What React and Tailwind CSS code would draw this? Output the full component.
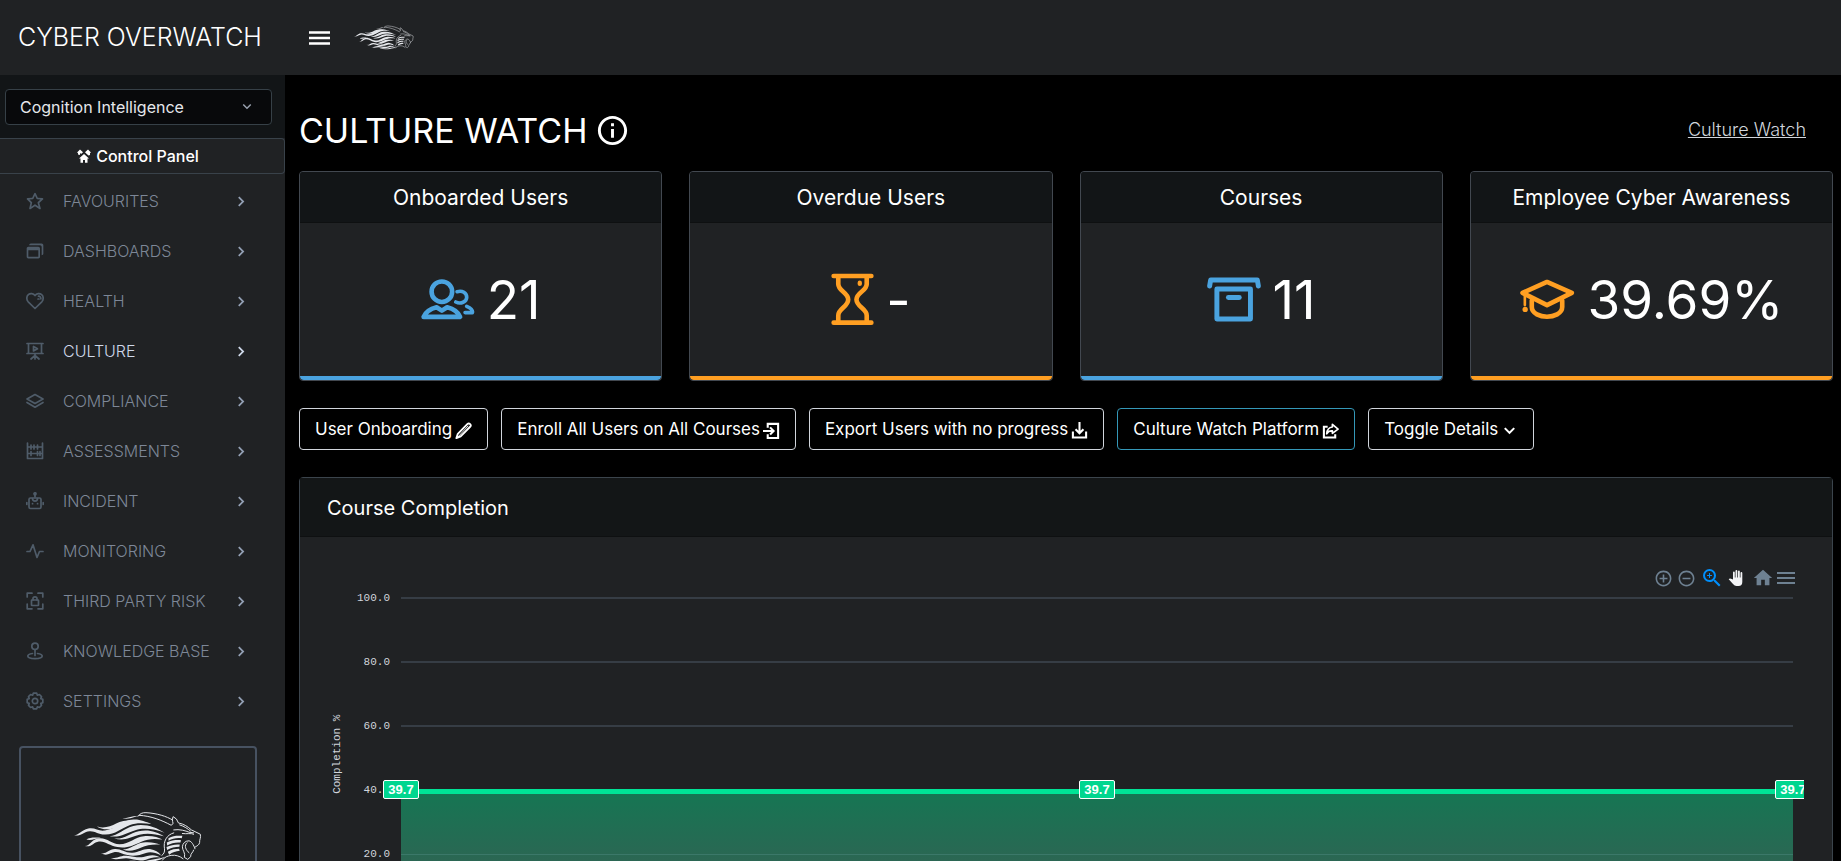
import React from 'react';
import { BiStar, BiWindows, BiChevronRight, BiChevronDown, BiInfoCircle } from 'react-icons/bi';
import { MdAddCircleOutline, MdRemoveCircleOutline, MdZoomIn, MdHome, MdMenu } from 'react-icons/md';
import { clsx } from 'clsx';

const LionLogo = ({ className }) => (
  <svg viewBox="218 276 388 160" className={className} fill="currentColor" aria-hidden="true">
    {/* mane */}
    <path d="M219 350C236 347 240 334 262 329C282 325 292 338 312 335C346 331 362 303 398 302C420 301 434 309 452 315C430 312 404 311 388 318C360 329 344 346 314 347C292 348 284 336 266 337C248 338 244 352 219 350Z" />
    <path d="M288 322C306 330 330 323 346 314C362 304 384 303 404 304C376 307 364 318 348 325C328 334 302 334 288 322Z" />
    <path d="M360 299C378 299 392 290 414 290C398 294 388 301 360 299Z" />
    <path d="M326 352C352 350 370 328 398 321C432 313 466 324 492 342C462 330 430 326 404 334C376 342 358 358 326 352Z" />
    <path d="M340 359C372 362 388 342 414 337C446 331 470 340 490 352C462 345 438 342 416 348C388 356 370 368 340 359Z" />
    <path d="M252 382C268 380 270 364 290 359C318 354 330 376 356 376C388 376 402 354 430 352C456 350 474 356 486 362C458 358 440 361 424 368C398 380 378 390 350 385C326 381 314 366 294 368C276 370 274 386 252 382Z" />
    <path d="M256 362C268 354 288 356 300 357C282 360 270 366 256 362Z" />
    <path d="M366 392C390 392 404 374 428 371C450 369 466 372 480 378C456 376 438 380 422 386C404 394 386 400 366 392Z" />
    <path d="M300 403C316 408 322 392 342 391C362 390 374 404 396 402C416 400 430 388 448 391C464 394 474 400 482 410C464 402 450 398 436 403C418 410 398 413 380 409C364 406 354 398 342 400C326 403 318 414 300 403Z" />
    <path d="M330 418C350 420 358 409 378 411C402 414 418 420 440 412C456 407 470 410 480 417C462 414 450 418 436 423C412 430 398 420 378 419C360 418 350 426 330 418Z" />
    <path d="M384 427C402 424 420 431 444 425C462 420 478 420 494 414C482 424 466 427 450 430C424 435 402 432 384 427Z" />
    {/* head */}
    <g fill="none" stroke="currentColor" strokeWidth="3" strokeLinecap="round" strokeLinejoin="round">
      <path d="M412 292Q420 280 436 281C470 283 498 292 516 303" />
      <path d="M416 289C452 291 484 304 512 319L518 314C515 305 516 298 518 293Q530 298 534 312C552 316 562 323 573 333L600 346C603 356 597 362 598 371C597 379 590 381 583 386" />
      <path d="M538 318C552 322 562 330 570 336M520 333C538 330 556 336 566 340L580 342M546 344C560 346 572 342 580 346" />
      <path d="M584 390C580 378 574 368 566 366C554 366 547 374 546 384C546 396 556 402 552 416L562 422L571 414C570 404 578 402 580 394" />
      <path d="M560 372C550 380 556 394 566 402M486 424C492 414 502 412 512 410C526 408 538 412 548 420" />
      <path d="M520 342C498 348 488 368 492 390C493 400 490 406 484 410" />
    </g>
    <path d="M504 358C518 350 532 350 546 351L544 358C530 356 516 358 504 366Z" />
    <path d="M499 371C514 364 528 363 542 364L540 371C526 370 512 372 500 380Z" />
    <path d="M498 385C512 378 524 376 538 377L537 384C524 384 512 387 500 394Z" />
    <path d="M502 399C514 392 524 390 536 390L538 396C526 398 516 400 506 408Z" />
  </svg>
);

const Outline = ({ children }) => (
  <svg viewBox="0 0 18 18" className="size-[18px]" fill="none" stroke="currentColor" strokeWidth="1.700" strokeLinecap="round" strokeLinejoin="round" aria-hidden="true">
    {children}
  </svg>
);

const LayersIcon = () => (
  <Outline>
    <path d="M9 2.500 17 7 9 11.500 1 7ZM1 10.500 9 15.200 17 10.500" />
  </Outline>
);

const HeartIcon = () => (
  <Outline>
    <path d="M9 16.500 2.200 9.800C.3 7.700.4 4.300 2.300 2.700 4.300.9 7.400 1.300 9 3.500 10.600 1.300 13.700.9 15.700 2.700 17.600 4.300 17.700 7.700 15.800 9.800Z" />
    <path d="M12.500 4.200c1.600 0 2.500 1.200 2.400 2.700M12 7h1" />
  </Outline>
);

const BoardIcon = () => (
  <Outline>
    <path d="M1 1.500H17M2.500 1.500V11.500M15.500 1.500V11.500M1 11.500H17M9 12V14M9 13.500 5 17M9 13.500 13 17M9 14V17" />
    <path d="M7.500 4.500V9L11.500 6.800Z" />
  </Outline>
);

const AbacusIcon = () => (
  <Outline>
    <path d="M1.500 1V16.500H16.500V1M1.500 5H16.500M1.500 11.500H16.500M5 3V7M8 3V7M11.500 3V7M5 9.500V13.500M11.500 9.500V13.500M14 9.500V13.500" />
  </Outline>
);

const BotIcon = () => (
  <Outline>
    <rect x="3" y="6" width="12" height="10.500" rx="1.500" />
    <path d="M9 2.500V5M.8 10.500V12.500M17.200 10.500V12.500M6.500 6.500C6.500 10 11.500 10 11.500 6.500M6.500 11.700H6.600M11.500 11.700H11.600" />
    <circle cx="9" cy="1.800" r="1" />
  </Outline>
);

const PulseIcon = () => (
  <Outline>
    <path d="M1 9.500H4L7 2.800 11 15.500 13.500 9.500H17" />
  </Outline>
);

const ScanLockIcon = () => (
  <Outline>
    <path d="M1.200 5V1.200H6M12 1.200H16.800V5M16.800 12V16.800H12M6 16.800H1.200V12" />
    <rect x="5.500" y="8" width="7" height="5.500" rx=".5" />
    <path d="M7 8V6.500C7 4.200 11 4.200 11 6.500V8" />
  </Outline>
);

const PinIcon = () => (
  <Outline>
    <circle cx="9" cy="4.300" r="3.200" />
    <path d="M9 7.500V13.500M6.500 11.500C3.500 12 1.800 12.800 1.800 14 1.800 17.500 16.200 17.500 16.200 14 16.200 12.800 14.500 12 11.500 11.500" />
  </Outline>
);

const GearIcon = () => (
  <Outline>
    <circle cx="9" cy="9" r="2.700" />
    <path d="M7.300 1.200H10.700L11.400 3.200 13.400 2.500 15.500 4.600 14.800 6.600 16.800 7.300V10.700L14.800 11.400 15.500 13.400 13.400 15.500 11.400 14.800 10.700 16.800H7.300L6.600 14.800 4.600 15.500 2.500 13.400 3.200 11.400 1.200 10.700V7.300L3.200 6.600 2.500 4.600 4.600 2.500 6.600 3.200Z" />
  </Outline>
);

// the heavier, square-cornered icons of the action buttons
const Bold = ({ children }) => (
  <svg viewBox="0 0 18 18" className="size-[17px]" fill="none" stroke="currentColor" strokeWidth="2.200" aria-hidden="true">
    {children}
  </svg>
);

const PencilIcon = () => (
  <Bold>
    <path strokeWidth="2" strokeLinejoin="round" d="M1.500 17 3 12.500 13 2.200Q14.500.8 16 2.200T16 5L6 15.200Z" />
    <path d="M3 16 14 4" strokeWidth="1" />
  </Bold>
);

const EnrollIcon = () => (
  <Bold>
    <path d="M5 6V2H16V17H5V13M0 9.500H11M7.500 5.700 11.200 9.500 7.500 13.300" />
  </Bold>
);

const DownloadIcon = () => (
  <Bold>
    <path d="M2 10V16.500H16V10M9 0V12M4.800 7.700 9 12 13.200 7.700" />
  </Bold>
);

const ShareIcon = () => (
  <Bold>
    <path d="M6 5H2V16.500H14V13" />
    <path strokeWidth="1.800" strokeLinejoin="round" d="M11 2.500 17 7.500 11 12V9.500C8 9.300 6.200 10.300 5 12.500 5.300 8.300 7.500 5.600 11 5.300Z" />
  </Bold>
);

const ToggleIcon = () => (
  <Bold>
    <path d="M4 6.500 9 11.500 14 6.500" />
  </Bold>
);

const HousesIcon = () => (
  <svg viewBox="0 0 14 14" className="size-[14px]" fill="currentColor" aria-hidden="true">
    <path d="M7 5 2 9.500H3.500V13.800H6V11H8V13.800H10.500V9.500H12Z" />
    <path d="M0 3.500 3 .500 6 3.200 4.500 4.700 3 4.200V6L1 5.500V4Z" />
    <path d="M14 3.500 11 .500 8 3.200 9.500 4.700 11.500 6.500 13 6V4Z" />
  </svg>
);

const UsersIcon = () => (
  <svg viewBox="397 566 163 123" className="h-[41px] w-[54px]" fill="none" stroke="currentColor" strokeWidth="14" strokeLinecap="round" strokeLinejoin="round" aria-hidden="true">
    <circle cx="460" cy="604" r="31" />
    <path d="M405 680C411 665 428 655 444 651L460 661 476 651C492 655 509 665 515 680Z" />
    <path strokeWidth="11" d="M506 604C522 599 535 608 535 621S517 643 502 635M535 648C548 654 554 661 552 667H530" />
  </svg>
);

const HourglassIcon = () => (
  <svg viewBox="120 338 130 158" className="h-[53px] w-[43px]" fill="none" stroke="currentColor" strokeWidth="14" strokeLinecap="round" aria-hidden="true">
    <path d="M128 346H242M128 487H242M142 350V370C142 392 172 395 172 417S142 445 142 465V484M228 350V370C228 392 197 395 197 417S228 445 228 465V484" />
    <path strokeWidth="13" d="M207 366V370" />
  </svg>
);

const ArchiveIcon = () => (
  <svg viewBox="1253 349 164 136" className="h-[45px] w-[54px]" fill="none" stroke="currentColor" strokeWidth="15" strokeLinecap="round" strokeLinejoin="round" aria-hidden="true">
    <path d="M1261 376 1264 358H1406L1409 376" />
    <rect x="1283" y="385" width="102" height="91" />
    <path d="M1318 411H1351" />
  </svg>
);

const GraduationIcon = () => (
  <svg viewBox="236 535 168 124" className="h-[41px] w-[56px]" fill="none" stroke="currentColor" strokeWidth="14" strokeLinecap="round" strokeLinejoin="round" aria-hidden="true">
    <path d="M246 577 320 544 395 577 320 614Z" />
    <path d="M274 600V620C274 640 300 649 320 649S366 640 366 620V600" />
    <path strokeWidth="8" d="M253 582V614" />
    <circle cx="254" cy="627" r="8" fill="currentColor" stroke="none" />
  </svg>
);

const HandIcon = () => (
  <svg viewBox="0 0 16 16" className="size-4" fill="currentColor" aria-hidden="true">
    <path d="M5 9.500V2.500Q5 1.500 5.900 1.500T6.800 2.500V7.500H7.500V1Q7.500 0 8.400 0T9.300 1V7.500H10V1.500Q10 .500 10.900.500T11.800 1.500V7.500H12.500V3Q12.500 2 13.400 2T14.300 3V12Q14.300 16 10.500 16H8.500Q6.500 16 5 14L.700 9.300Q1.500 8 3 8.700Z" />
  </svg>
);

const navItems = [
  { label: 'FAVOURITES', icon: <BiStar size={20} /> },
  { label: 'DASHBOARDS', icon: <BiWindows size={20} /> },
  { label: 'HEALTH', icon: <HeartIcon /> },
  { label: 'CULTURE', icon: <BoardIcon />, active: true },
  { label: 'COMPLIANCE', icon: <LayersIcon /> },
  { label: 'ASSESSMENTS', icon: <AbacusIcon /> },
  { label: 'INCIDENT', icon: <BotIcon /> },
  { label: 'MONITORING', icon: <PulseIcon /> },
  { label: 'THIRD PARTY RISK', icon: <ScanLockIcon /> },
  { label: 'KNOWLEDGE BASE', icon: <PinIcon /> },
  { label: 'SETTINGS', icon: <GearIcon /> },
];

const stats = [
  { title: 'Onboarded Users', value: '21', icon: <UsersIcon />, tone: 'blue' },
  { title: 'Overdue Users', value: '-', icon: <HourglassIcon />, tone: 'orange' },
  { title: 'Courses', value: '11', icon: <ArchiveIcon />, tone: 'blue' },
  { title: 'Employee Cyber Awareness', value: '39.69%', icon: <GraduationIcon />, tone: 'orange' },
];

const actions = [
  { label: 'User Onboarding', icon: <PencilIcon /> },
  { label: 'Enroll All Users on All Courses', icon: <EnrollIcon /> },
  { label: 'Export Users with no progress', icon: <DownloadIcon /> },
  { label: 'Culture Watch Platform', icon: <ShareIcon />, highlight: true },
  { label: 'Toggle Details', icon: <ToggleIcon /> },
];

const ticks = ['100.0', '80.0', '60.0', '40.0', '20.0', '0.0'];

const Header = () => (
  <header className="flex h-[75px] shrink-0 items-center bg-[#202224]">
    <div className="w-[285px] pl-[18px] text-[25px] font-light">CYBER OVERWATCH</div>
    <button type="button" aria-label="Toggle menu" className="ml-6">
      <svg viewBox="0 0 21 14" className="h-[14px] w-[21px]" stroke="currentColor" strokeWidth="2.500" aria-hidden="true">
        <path d="M0 1.500H21M0 7H21M0 12.500H21" />
      </svg>
    </button>
    <LionLogo className="ml-6 h-[25px] w-[60px] text-gray-200" />
  </header>
);

const Sidebar = () => (
  <aside className="flex w-[285px] shrink-0 flex-col overflow-hidden bg-[#202224]">
    <div className="shrink-0 bg-[#121517] pt-[14px] pr-[13px] pb-[13px] pl-[5px]">
      <div className="relative">
        <select aria-label="Organisation" className="h-9 w-full appearance-none rounded border border-[#364047] bg-[#08090b] pl-[14px] text-base text-gray-200">
          <option>Cognition Intelligence</option>
        </select>
        <BiChevronDown size={18} className="pointer-events-none absolute top-2 right-4 text-gray-400" />
      </div>
    </div>
    <button type="button" className="flex h-9 shrink-0 items-center justify-center gap-[5px] rounded-r-sm border border-l-0 border-[#39424a] pr-2 text-base font-medium">
      <HousesIcon />
      Control Panel
    </button>
    <nav className="shrink-0 pt-0.5">
      {navItems.map((item) => (
        <a
          key={item.label}
          href="#"
          className={clsx('flex h-[50px] items-center pr-[34px] pl-[25px]', item.active ? 'text-[#cfd9ea]' : 'text-[#7d8797]')}
        >
          <span className="flex w-5 justify-center text-[#4f5c69]">{item.icon}</span>
          <span className="ml-[18px] text-base font-light">{item.label}</span>
          <BiChevronRight size={21} className={clsx('ml-auto', item.active ? 'text-[#cfd9ea]' : 'text-[#93a0b4]')} />
        </a>
      ))}
    </nav>
    <div className="mt-5 mr-7 ml-[19px] flex h-[238px] shrink-0 justify-center rounded border-2 border-[#475261] pt-[63px]">
      <LionLogo className="h-[53px] w-[130px] text-gray-200" />
    </div>
  </aside>
);

const StatCard = ({ title, value, icon, tone }) => (
  <article className="overflow-hidden rounded border border-[#424850] bg-[#202224]">
    <h2 className="flex h-[51px] items-center justify-center border-b border-[#0e1011] bg-[#121517] pt-0.5 text-[21px]">{title}</h2>
    <div
      className={clsx(
        'flex h-[157px] items-center justify-center gap-3 rounded-b border-b-4',
        tone === 'blue' ? 'border-[#4aa3df]' : 'border-[#ff9f22]'
      )}
    >
      <span className={tone === 'blue' ? 'text-[#4aa3df]' : 'text-[#ff9f22]'}>{icon}</span>
      <span className="pt-0.5 text-[53px] leading-none">{value}</span>
    </div>
  </article>
);

const PointLabel = ({ className }) => (
  <span className={clsx('absolute top-[190px] flex h-[19px] w-9 -translate-x-1/2 items-center justify-center rounded-xs border border-white bg-[#00d68f] font-[Liberation_Sans] text-[13px] font-bold', className)}>
    39.7
  </span>
);

const CompletionChart = () => (
  <div className="overflow-hidden px-7 pt-[29px] pb-8">
    <div className="relative overflow-hidden">
      <div className="flex items-center justify-end pr-1.5 text-[#6e8192]">
        <button type="button" aria-label="Zoom in" className="mr-1"><MdAddCircleOutline size={19} /></button>
        <button type="button" aria-label="Zoom out" className="mr-1"><MdRemoveCircleOutline size={19} /></button>
        <button type="button" aria-label="Selection zoom" className="mr-1 text-[#008ffb]"><MdZoomIn size={24} /></button>
        <button type="button" aria-label="Pan" className="mr-2 text-gray-100"><HandIcon /></button>
        <button type="button" aria-label="Reset zoom"><MdHome size={22} /></button>
        <button type="button" aria-label="Chart menu"><MdMenu size={24} /></button>
      </div>
      <div className="flex">
        <div className="flex h-[328px] w-5 items-center justify-center">
          <span className="-rotate-90 font-[Liberation_Mono] text-[11px] whitespace-nowrap text-gray-300">Completion %</span>
        </div>
        <div className="flex w-[42px] flex-col text-right font-[Liberation_Mono] text-[11px] text-gray-300">
          {ticks.map((tick) => (
            <span key={tick} className="h-16 leading-4">{tick}</span>
          ))}
        </div>
        <div className="relative mr-[11px] ml-[11px] h-[344px] flex-1">
          <svg className="h-full w-full" aria-hidden="true">
            <defs>
              <linearGradient id="fade" x1="0" y1="0" x2="0" y2="1">
                <stop offset="0" stopColor="#157653" />
                <stop offset="1" stopColor="#3d5a53" />
              </linearGradient>
            </defs>
            <rect x="0" y="201" width="100%" height="127" fill="url(#fade)" />
            <g stroke="#363d45" strokeWidth="2">
              <line x1="0" x2="100%" y1="8" y2="8" />
              <line x1="0" x2="100%" y1="72" y2="72" />
              <line x1="0" x2="100%" y1="136" y2="136" />
            </g>
            <line x1="0" x2="100%" y1="264.500" y2="264.500" stroke="#3b7869" />
            <line x1="0" x2="100%" y1="201.500" y2="201.500" stroke="#00e396" strokeWidth="5" />
          </svg>
          <PointLabel className="left-0" />
          <PointLabel className="left-1/2" />
          <PointLabel className="left-full" />
        </div>
      </div>
    </div>
  </div>
);

const App = () => {
  return (
    <div className="flex h-screen flex-col overflow-hidden bg-black font-[Inter,sans-serif] text-white">
      <Header />
      <div className="flex min-h-0 flex-1">
        <Sidebar />
        <main className="min-w-0 flex-1 overflow-hidden pr-2 pl-[14px]">
          <div className="flex h-24 items-center justify-between pt-[14px] pr-[27px]">
            <h1 className="flex items-center gap-2 text-[34px]">
              CULTURE WATCH
              <BiInfoCircle size={35} />
            </h1>
            <a href="#" className="text-lg font-light text-gray-300 underline">Culture Watch</a>
          </div>

          <section className="grid grid-cols-4 gap-[27px]">
            {stats.map((stat) => (
              <StatCard key={stat.title} {...stat} />
            ))}
          </section>

          <div className="mt-[27px] flex gap-[13px]">
            {actions.map((action) => (
              <button
                key={action.label}
                type="button"
                className={clsx(
                  'flex h-[42px] items-center gap-[3px] rounded border px-[15px] pt-0.5 text-[17px] whitespace-nowrap',
                  action.highlight ? 'border-[#3498b8]' : 'border-gray-300'
                )}
              >
                {action.label}
                {action.icon}
              </button>
            ))}
          </div>

          <section className="mt-[27px] rounded border border-[#3b444c] bg-[#202224]">
            <h2 className="flex h-[59px] items-center border-b border-[#0e1011] bg-[#131617] px-[27px] pt-0.5 text-[20px]">Course Completion</h2>
            <CompletionChart />
          </section>
        </main>
      </div>
    </div>
  );
};

export default App;
